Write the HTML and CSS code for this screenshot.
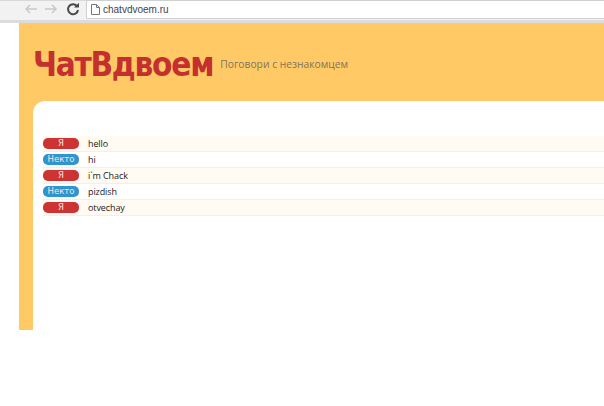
FILE: index.html
```html
<!DOCTYPE html>
<html lang="ru">
<head>
    <meta charset="UTF-8">
    <meta name="viewport" content="width=device-width, initial-scale=1.0">
    <title>ЧатВдвоем</title>
    <link rel="stylesheet" href="styles.css">
</head>
<body>
    <div class="toolbar">
        <svg class="nav-icon" width="14" height="12" viewBox="0 0 14 12"><path d="M13 6H2M6 2L2 6l4 4" fill="none" stroke="#c9c9c9" stroke-width="1.5"/></svg>
        <svg class="nav-icon" width="14" height="12" viewBox="0 0 14 12"><path d="M1 6h11M8 2l4 4-4 4" fill="none" stroke="#c9c9c9" stroke-width="1.5"/></svg>
        <svg class="nav-icon" width="14" height="14" viewBox="0 0 14 14"><path d="M11 4.2A5 5 0 1 0 12 8" fill="none" stroke="#4a4a4a" stroke-width="2"/><path d="M8 5.5h5V.8z" fill="#4a4a4a"/></svg>
        <div class="address">
            <svg width="9" height="11" viewBox="0 0 9 11"><path d="M.5.5h5l3 3v7h-8zM5.500.5v3h3" fill="#fff" stroke="#777"/></svg>
            <span>chatvdvoem.ru</span>
        </div>
    </div>
    <div class="page">
        <header>
            <h1>ЧатВдвоем</h1>
            <p>Поговори с незнакомцем</p>
        </header>
        <main>
            <div class="row"><span class="badge me">Я</span><span class="msg">hello</span></div>
            <div class="row"><span class="badge other">Некто</span><span class="msg">hi</span></div>
            <div class="row"><span class="badge me">Я</span><span class="msg">i`m Chack</span></div>
            <div class="row"><span class="badge other">Некто</span><span class="msg">pizdish</span></div>
            <div class="row"><span class="badge me">Я</span><span class="msg">otvechay</span></div>
        </main>
    </div>
</body>
</html>
```
FILE: styles.css
```css
html, body {
    margin: 0;
    padding: 0;
    background-color: #fff;
    overflow: hidden;
}
body {
    width: 604px;
    height: 406px;
    font-family: "DejaVu Sans", sans-serif;
}
.toolbar {
    display: flex;
    align-items: center;
    gap: 6px;
    box-sizing: border-box;
    height: 23px;
    padding: 0 0 3px 24px;
    background-color: #f2f2f2;
    border-top: 1px solid #d8d8d8;
    border-bottom: 3px solid #dcdcdc;
}
.nav-icon {
    flex: none;
}
.nav-icon + .nav-icon + .nav-icon {
    margin-left: 2px;
}
.address {
    display: flex;
    align-items: center;
    gap: 3px;
    flex: 1;
    height: 17px;
    padding-left: 4px;
    background-color: #fff;
    border: 1px solid #d0d0d0;
    border-right: none;
    border-radius: 2px 0 0 2px;
    font-family: "Liberation Sans", sans-serif;
    font-size: 10px;
    color: #444;
}
.page {
    display: flex;
    flex-direction: column;
    box-sizing: border-box;
    height: 307px;
    margin-left: 19px;
    background-color: #ffc966;
}
header {
    display: flex;
    align-items: center;
    gap: 7px;
    height: 78px;
    box-sizing: border-box;
    padding: 4px 0 0 14px;
}
h1 {
    margin: 0;
    font-family: "DejaVu Sans Condensed", "DejaVu Sans", sans-serif;
    font-stretch: condensed;
    font-size: 33px;
    font-weight: bold;
    letter-spacing: -1.25px;
    color: #c4302f;
}
header p {
    margin: 0;
    font-family: "Open Sans", sans-serif;
    font-size: 10.3px;
    color: #85745a;
}
main {
    flex: 1;
    margin-left: 14px;
    padding: 35px 0 0 10px;
    background-color: #fff;
    border-top-left-radius: 12px;
}
.row {
    display: flex;
    align-items: center;
    height: 15px;
    background-color: #fffbf2;
    border-bottom: 1px solid #f4f0e4;
}
.row:nth-child(even) {
    background-color: #fff;
}
.badge {
    width: 36px;
    height: 11px;
    margin-right: 9px;
    border-radius: 5px;
    font-size: 8.5px;
    line-height: 11px;
    text-align: center;
    color: #f4e4e0;
}
.me {
    background-color: #cd3333;
}
.other {
    background-color: #2e95d0;
}
.msg {
    font-family: "Open Sans", sans-serif;
    font-size: 9px;
    letter-spacing: -0.1px;
    color: #222;
}
```
